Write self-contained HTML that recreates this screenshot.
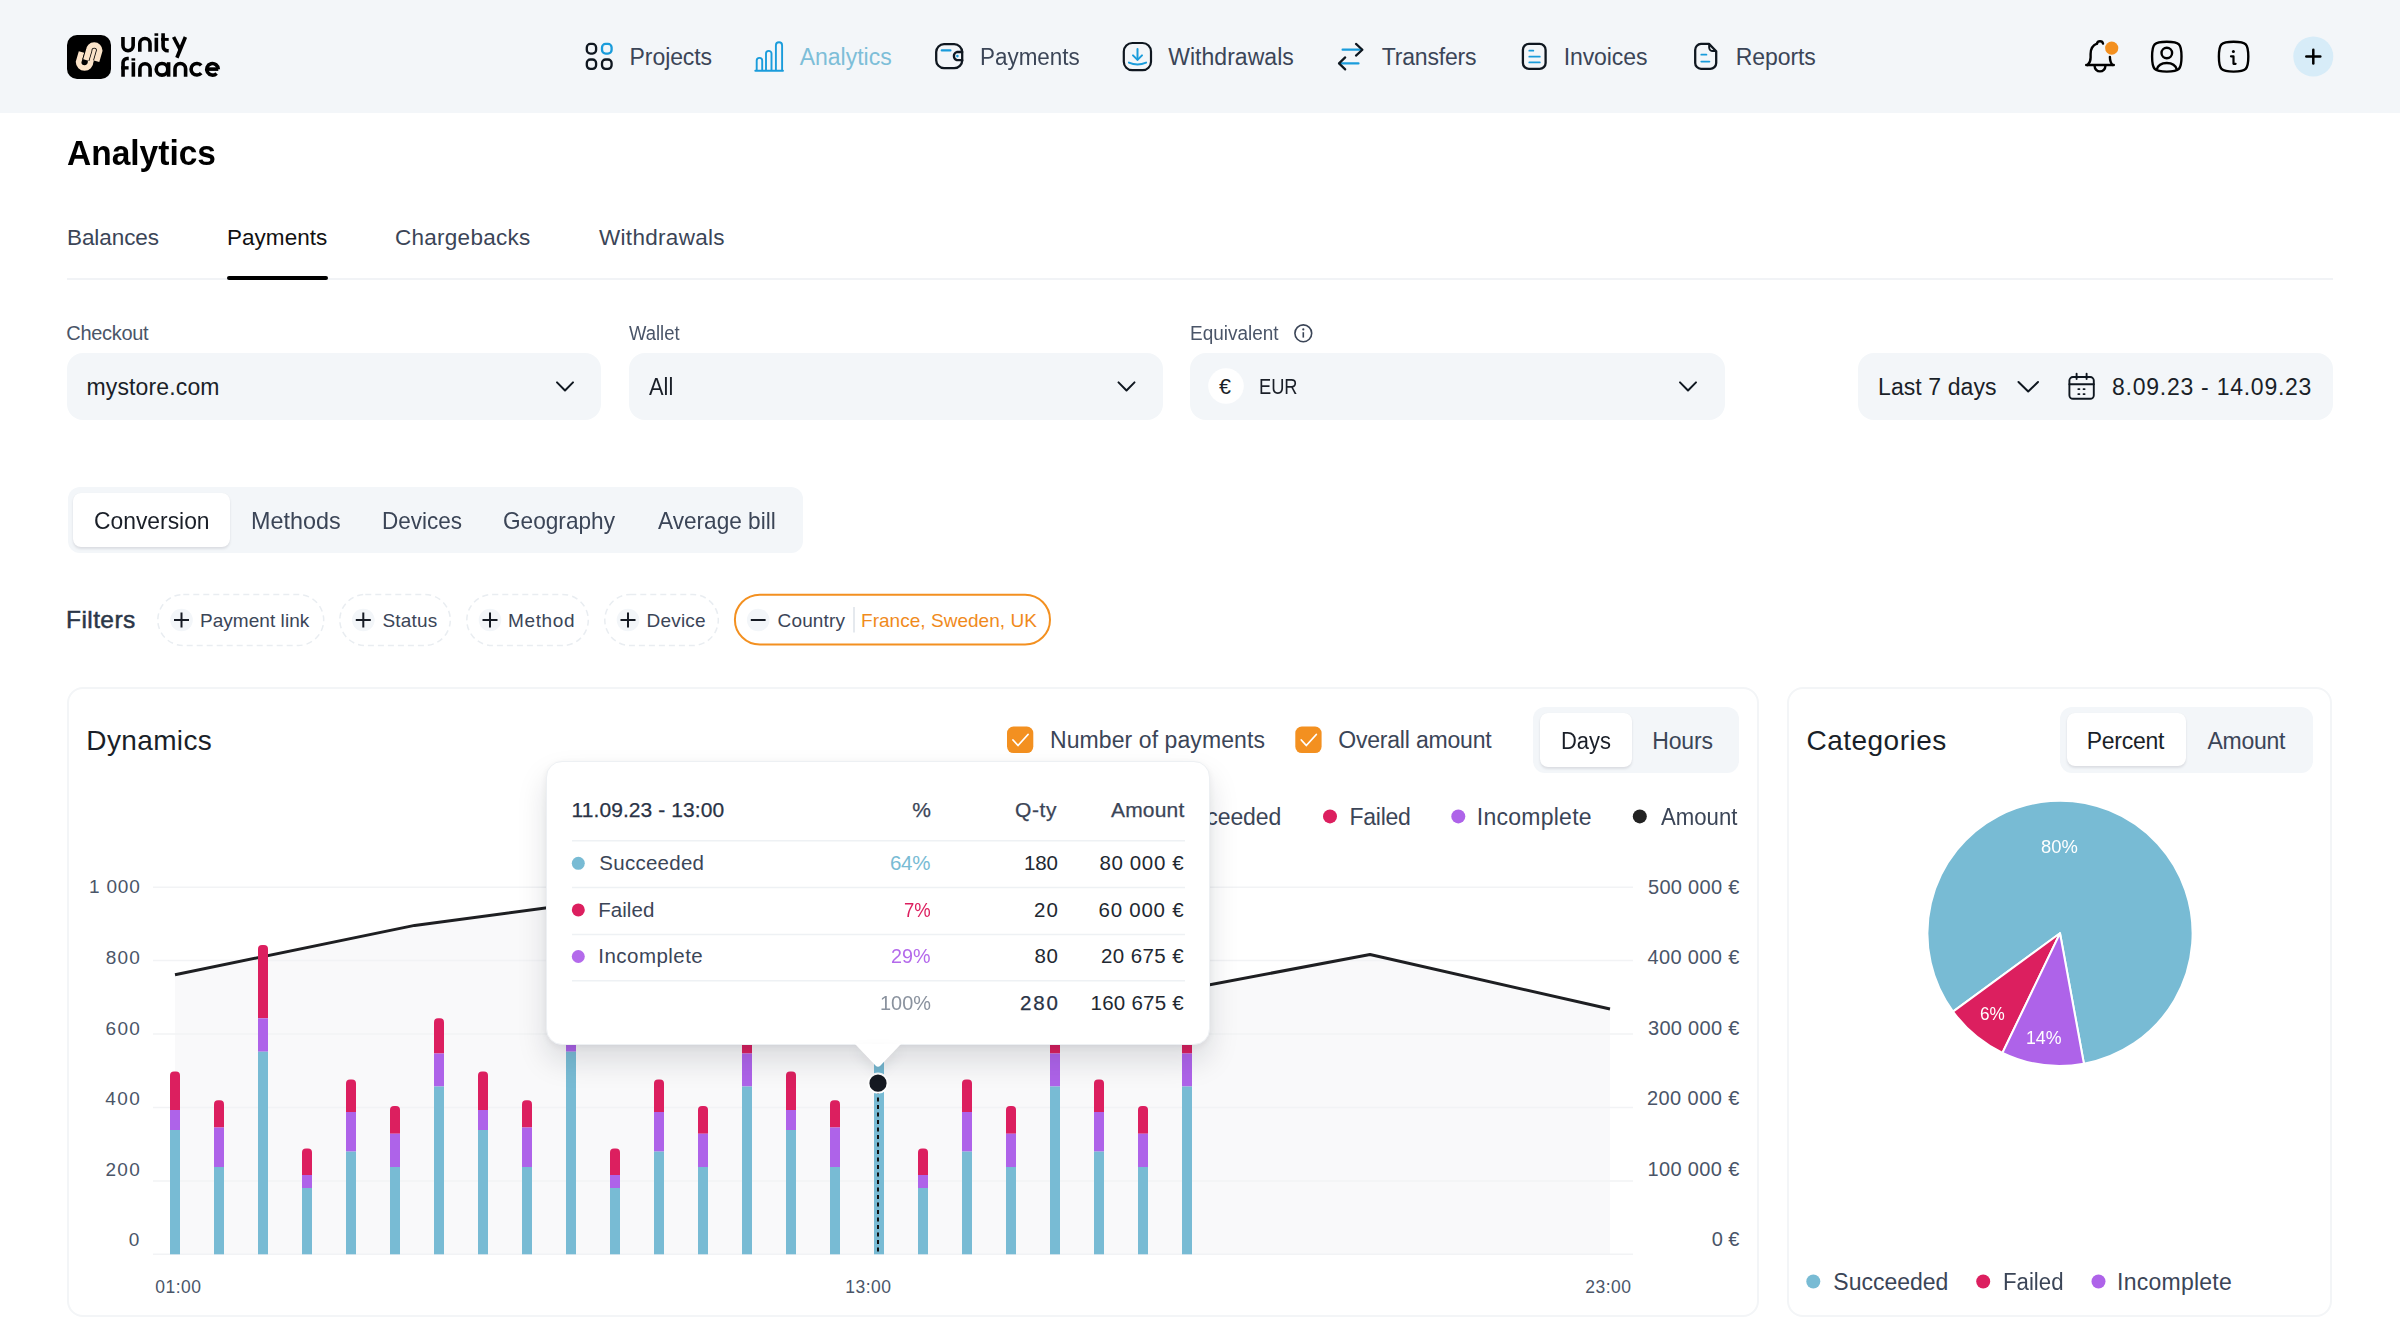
<!DOCTYPE html>
<html><head><meta charset="utf-8"><style>
html,body{margin:0;padding:0;width:2400px;height:1336px;overflow:hidden;background:#fff;}
body{position:relative;font-family:"Liberation Sans",sans-serif;}
.t{position:absolute;white-space:nowrap;font-family:"Liberation Sans",sans-serif;}
svg{position:absolute;overflow:visible;}
</style></head><body>
<div style="position:absolute;left:0.00px;top:0.00px;width:2400.00px;height:113.00px;border-radius:0px;background:#F3F6F9;"></div>
<svg width="2400" height="1336" style="left:0;top:0;" viewBox="0 0 2400 1336"><rect x="67" y="35" width="44" height="44" rx="10" fill="#000"/>
<g fill="none" stroke-linecap="butt">
<path d="M81.5 52 L78.6 62 A6 6 0 0 0 90.6 62 L95.2 46" stroke="#FBE3C8" stroke-width="5.6"/>
<path d="M85.9 60 L88.7 50.5 A5.5 5.5 0 0 1 99.7 50.5 L96.6 61.25" stroke="#000" stroke-width="7.2"/>
<path d="M85.9 60 L88.7 50.5 A5.5 5.5 0 0 1 99.7 50.5 L96.6 61.25" stroke="#FBE3C8" stroke-width="5.6"/>
</g></svg>
<svg width="2400" height="1336" style="left:0;top:0;" viewBox="0 0 2400 1336"><g fill="none" stroke="#000" stroke-width="3.6" stroke-linecap="butt">
<path d="M122.95 37 V45.6 A5.1 5.1 0 0 0 133.15 45.6 V37"/>
<path d="M139.8 51.8 V43.6 A5.1 5.1 0 0 1 150 43.6 V51.8"/>
<path d="M156.35 37.7 V51.8"/>
<path d="M163.1 33.3 V46.2 A4.6 4.6 0 0 0 167.7 50.8 H168.7"/>
<path d="M161.2 39.4 H168.7" stroke-width="2.9"/>
<path d="M173.6 37 L180.2 49.8"/>
<path d="M185.4 37 L176.9 57.8"/>
<path d="M123.05 76.7 V62.6 A4.1 4.1 0 0 1 127.15 58.5 H128.75"/>
<path d="M121.2 67.85 H128.6" stroke-width="3.4"/>
<path d="M133.35 62.2 V76.7"/>
<path d="M139.9 76.7 V68.8 A5.1 5.1 0 0 1 150.1 68.8 V76.7"/>
<circle cx="162" cy="69.3" r="5.8"/>
<path d="M168.6 62.2 V76.7"/>
<path d="M175 76.7 V68.8 A5.3 5.3 0 0 1 185.6 68.8 V76.7"/>
<path d="M201.2 65.4 A5.8 5.8 0 1 0 201.2 73.1"/>
<path d="M206.6 69.1 H218.3"/>
<path d="M218.3 69.3 A5.8 5.8 0 1 0 216.6 73.4"/>
</g>
<g fill="#000"><rect x="154.5" y="33.3" width="3.7" height="2.5"/><rect x="131.5" y="58.3" width="3.7" height="2.3"/></g></svg>
<svg width="2400" height="1336" style="left:0;top:0;" viewBox="0 0 2400 1336"><g fill="none" stroke="#0F1720" stroke-width="2.3">
<rect x="586.8" y="43.95" width="9.3" height="9.6" rx="3.6"/>
<rect x="586.8" y="59.5" width="9.3" height="9.4" rx="3.6"/>
<rect x="602" y="59.5" width="9.6" height="9.4" rx="3.6"/>
</g>
<rect x="602" y="43.95" width="9.6" height="9.6" rx="3.6" fill="none" stroke="#1A9CDB" stroke-width="2.3"/>
</svg>
<svg width="2400" height="1336" style="left:0;top:0;" viewBox="0 0 2400 1336"><g fill="none" stroke="#1A9CDB" stroke-width="1.9" stroke-linecap="round">
<path d="M756.7 70 V60.6 A2.75 2.75 0 0 1 762.2 60.6 V70"/>
<path d="M766 70 V53.6 A2.75 2.75 0 0 1 771.5 53.6 V70"/>
<path d="M775.9 70 V45.4 A3.1 3.1 0 0 1 782.1 45.4 V70"/>
<path d="M755.3 70.7 H783"/>
</g></svg>
<svg width="2400" height="1336" style="left:0;top:0;" viewBox="0 0 2400 1336"><g fill="none" stroke-width="2.3" stroke-linecap="round">
<path d="M962.2 52 V52 A8 8 0 0 0 954.2 44.2 H944 A8 8 0 0 0 936.2 52 V60.2 A8 8 0 0 0 944 68.2 H954.2 A8 8 0 0 0 962.2 60.2" stroke="#0F1720"/>
<path d="M962.2 52 H956.9 A4.3 4.3 0 0 0 956.9 60.2 H962.2 V52" stroke="#0F1720"/>
<path d="M941.8 50.4 H950.4" stroke="#1A9CDB"/>
</g><circle cx="957.4" cy="56.1" r="1.3" fill="#1A9CDB"/></svg>
<svg width="2400" height="1336" style="left:0;top:0;" viewBox="0 0 2400 1336"><rect x="1123.8" y="43" width="27.2" height="27.2" rx="8.5" fill="none" stroke="#0F1720" stroke-width="2.2"/>
<g fill="none" stroke="#1A9CDB" stroke-width="2" stroke-linecap="round" stroke-linejoin="round">
<path d="M1137.5 49 V59.6"/><path d="M1133 55.4 L1137.5 59.9 L1142 55.4"/>
<path d="M1128.9 62.6 Q1137.5 66.4 1146.1 62.6"/></g></svg>
<svg width="2400" height="1336" style="left:0;top:0;" viewBox="0 0 2400 1336"><g fill="none" stroke-width="2.2" stroke-linecap="round" stroke-linejoin="round">
<path d="M1342.6 49.7 H1361.5" stroke="#1A9CDB"/><path d="M1339.6 63.4 H1358.5" stroke="#1A9CDB"/>
<path d="M1356 43.9 L1362.4 49.7 L1356 55.6" stroke="#0F1720"/>
<path d="M1345.2 57.4 L1339 63.4 L1345.2 69.4" stroke="#0F1720"/></g></svg>
<svg width="2400" height="1336" style="left:0;top:0;" viewBox="0 0 2400 1336"><rect x="1522.9" y="43.9" width="22.7" height="25" rx="6" fill="none" stroke="#0F1720" stroke-width="2.3"/>
<g stroke="#1A9CDB" stroke-width="1.8" stroke-linecap="round"><path d="M1529.3 50.7 H1533.3"/><path d="M1529.3 56.7 H1539.8"/><path d="M1529.3 62.4 H1539.8"/></g></svg>
<svg width="2400" height="1336" style="left:0;top:0;" viewBox="0 0 2400 1336"><path d="M1709 43.9 H1701 A6 6 0 0 0 1695.2 49.9 V62.9 A6 6 0 0 0 1701 68.9 H1710.2 A6 6 0 0 0 1716.2 62.9 V51.2 Z" fill="none" stroke="#0F1720" stroke-width="2.3" stroke-linejoin="round"/>
<path d="M1709.2 44.2 V47.5 A3.6 3.6 0 0 0 1712.8 51.1 H1716" fill="none" stroke="#0F1720" stroke-width="2"/>
<g stroke="#1A9CDB" stroke-width="1.8" stroke-linecap="round"><path d="M1701.3 54.7 H1706.4"/><path d="M1701.3 61.6 H1709.4"/></g></svg>
<svg width="2400" height="1336" style="left:0;top:0;" viewBox="0 0 2400 1336"><g fill="none" stroke="#000" stroke-width="2.4" stroke-linecap="round" stroke-linejoin="round">
<path d="M2086.2 65 H2113.8"/>
<path d="M2087.6 65 Q2090.6 62.5 2090.6 57.5 V54 Q2090.6 46 2097 43.6"/>
<path d="M2097 43.6 Q2097.4 41.2 2100 41.2 Q2102.6 41.2 2103 43.6"/>
<path d="M2109.9 57 Q2110 62.5 2112.6 65"/>
<path d="M2094.6 66 A5.4 5.4 0 0 0 2105.4 66"/>
</g>
<circle cx="2111.7" cy="48.1" r="6.6" fill="#F39020"/></svg>
<svg width="2400" height="1336" style="left:0;top:0;" viewBox="0 0 2400 1336"><g fill="none" stroke="#000" stroke-width="2.4">
<path d="M2166.8 41.7 C2179.5 41.7 2181.5 43.7 2181.5 56.6 C2181.5 69.5 2179.5 71.6 2166.8 71.6 C2154.1 71.6 2152.1 69.5 2152.1 56.6 C2152.1 43.7 2154.1 41.7 2166.8 41.7 Z"/>
<circle cx="2166.8" cy="53" r="5.3"/>
<path d="M2156.6 69.8 Q2158.5 63 2166.8 63 Q2175 63 2177 69.8"/>
</g></svg>
<svg width="2400" height="1336" style="left:0;top:0;" viewBox="0 0 2400 1336"><path d="M2233.6 41.7 C2246.3 41.7 2248.3 43.7 2248.3 56.6 C2248.3 69.5 2246.3 71.6 2233.6 71.6 C2220.9 71.6 2218.9 69.5 2218.9 56.6 C2218.9 43.7 2220.9 41.7 2233.6 41.7 Z" fill="none" stroke="#000" stroke-width="2.4"/>
<circle cx="2233.4" cy="51.6" r="1.5" fill="#000"/>
<path d="M2231 56.3 H2233.5 V63.8 H2235.6" fill="none" stroke="#000" stroke-width="2.2" stroke-linecap="round" stroke-linejoin="round"/></svg>
<svg width="2400" height="1336" style="left:0;top:0;" viewBox="0 0 2400 1336"><circle cx="2313.3" cy="56.5" r="20" fill="#D7ECF8"/>
<g stroke="#000" stroke-width="2.5" stroke-linecap="round"><path d="M2306.3 56.5 H2320.3"/><path d="M2313.3 49.8 V63.4"/></g></svg>
<div style="position:absolute;left:67.00px;top:277.50px;width:2266.00px;height:2.00px;border-radius:0px;background:#F1F3F6;"></div>
<div style="position:absolute;left:226.50px;top:276.30px;width:101.90px;height:3.80px;border-radius:2px;background:#000;"></div>
<div style="position:absolute;left:67.00px;top:353.20px;width:534.30px;height:66.60px;border-radius:16px;background:#F3F6F9;"></div>
<div style="position:absolute;left:628.50px;top:353.20px;width:534.50px;height:66.60px;border-radius:16px;background:#F3F6F9;"></div>
<div style="position:absolute;left:1190.00px;top:353.20px;width:535.00px;height:66.60px;border-radius:16px;background:#F3F6F9;"></div>
<div style="position:absolute;left:1858.30px;top:353.20px;width:474.80px;height:66.60px;border-radius:16px;background:#F3F6F9;"></div>
<svg width="2400" height="1336" style="left:0;top:0;" viewBox="0 0 2400 1336"><path d="M557.0 382.4 L565.0 390.5 L573.0 382.4" fill="none" stroke="#0F1720" stroke-width="2.0" stroke-linecap="round" stroke-linejoin="round"/><path d="M1118.5 382.4 L1126.5 390.5 L1134.5 382.4" fill="none" stroke="#0F1720" stroke-width="2.0" stroke-linecap="round" stroke-linejoin="round"/><path d="M1680.0 382.4 L1688.0 390.5 L1696.0 382.4" fill="none" stroke="#0F1720" stroke-width="2.0" stroke-linecap="round" stroke-linejoin="round"/><path d="M2018.5 382.0 L2028.2 391.5 L2038.0 382.0" fill="none" stroke="#0F1720" stroke-width="2.0" stroke-linecap="round" stroke-linejoin="round"/></svg>
<svg width="2400" height="1336" style="left:0;top:0;" viewBox="0 0 2400 1336"><g fill="none" stroke="#0F1720" stroke-width="1.9" stroke-linecap="round">
<rect x="2069.4" y="377" width="24.4" height="21.8" rx="3.6"/>
<path d="M2069.4 384.3 H2093.8"/><path d="M2076.6 373.8 V379"/><path d="M2086.6 373.8 V379"/>
</g><g fill="#0F1720"><rect x="2077.4" y="388.3" width="2.9" height="1.8" rx="0.8"/><rect x="2082.6" y="388.3" width="2.9" height="1.8" rx="0.8"/><rect x="2077.4" y="393.2" width="2.9" height="1.8" rx="0.8"/><rect x="2082.6" y="393.2" width="2.9" height="1.8" rx="0.8"/></g></svg>
<svg width="2400" height="1336" style="left:0;top:0;" viewBox="0 0 2400 1336"><circle cx="1303.3" cy="333.3" r="8.4" fill="none" stroke="#3B4557" stroke-width="1.6"/>
<circle cx="1303.3" cy="329.4" r="1.1" fill="#3B4557"/><path d="M1303.3 332.2 V337.6" stroke="#3B4557" stroke-width="1.6"/>
<circle cx="1226" cy="386" r="17.8" fill="#fff"/></svg>
<div style="position:absolute;left:67.50px;top:486.70px;width:735.80px;height:66.60px;border-radius:12px;background:#F3F6F9;"></div>
<div style="position:absolute;left:73.30px;top:493.30px;width:156.70px;height:53.70px;border-radius:8px;background:#fff;box-shadow:0 2px 2.5px rgba(16,24,40,0.10),0 0 1px rgba(16,24,40,0.06);"></div>
<svg width="2400" height="1336" style="left:0;top:0;" viewBox="0 0 2400 1336"><rect x="157.8" y="594.5" width="165.9" height="51" rx="25.5" fill="none" stroke="#E9EDF1" stroke-width="1.5" stroke-dasharray="6 4"/><circle cx="181.5" cy="620" r="11.3" fill="#F3F6F9"/><g stroke="#161B24" stroke-width="2" stroke-linecap="butt"><path d="M174.0 620 H189.0"/><path d="M181.5 612.5 V627.5"/></g><rect x="339.8" y="594.5" width="110.5" height="51" rx="25.5" fill="none" stroke="#E9EDF1" stroke-width="1.5" stroke-dasharray="6 4"/><circle cx="363.3" cy="620" r="11.3" fill="#F3F6F9"/><g stroke="#161B24" stroke-width="2" stroke-linecap="butt"><path d="M355.8 620 H370.8"/><path d="M363.3 612.5 V627.5"/></g><rect x="466.8" y="594.5" width="121.5" height="51" rx="25.5" fill="none" stroke="#E9EDF1" stroke-width="1.5" stroke-dasharray="6 4"/><circle cx="490.0" cy="620" r="11.3" fill="#F3F6F9"/><g stroke="#161B24" stroke-width="2" stroke-linecap="butt"><path d="M482.5 620 H497.5"/><path d="M490.0 612.5 V627.5"/></g><rect x="604.8" y="594.5" width="113.5" height="51" rx="25.5" fill="none" stroke="#E9EDF1" stroke-width="1.5" stroke-dasharray="6 4"/><circle cx="628.0" cy="620" r="11.3" fill="#F3F6F9"/><g stroke="#161B24" stroke-width="2" stroke-linecap="butt"><path d="M620.5 620 H635.5"/><path d="M628.0 612.5 V627.5"/></g><rect x="734.9" y="594.75" width="315.1" height="49.75" rx="24.9" fill="none" stroke="#F39020" stroke-width="2"/><circle cx="758.2" cy="620" r="11.3" fill="#F3F6F9"/><path d="M750.8 620 H765.6" stroke="#161B24" stroke-width="2"/><path d="M854 607 V632.4" stroke="#DCE2E9" stroke-width="1.5"/></svg>
<div style="position:absolute;left:67.30px;top:687.30px;width:1691.70px;height:630.00px;border-radius:16px;background:#fff;box-sizing:border-box;border:2px solid #F3F5F7;"></div>
<div style="position:absolute;left:1787.40px;top:687.30px;width:544.60px;height:630.00px;border-radius:16px;background:#fff;box-sizing:border-box;border:2px solid #F3F5F7;"></div>
<svg width="2400" height="1336" style="left:0;top:0;" viewBox="0 0 2400 1336"><rect x="1007.0" y="726.6" width="26.3" height="26.5" rx="6.5" fill="#F39020"/><path d="M1013.0 740 L1018.0 745.5 L1028.0 734.5" fill="none" stroke="#fff" stroke-width="1.8" stroke-linecap="round" stroke-linejoin="round"/></svg>
<svg width="2400" height="1336" style="left:0;top:0;" viewBox="0 0 2400 1336"><rect x="1295.3" y="726.6" width="26.3" height="26.5" rx="6.5" fill="#F39020"/><path d="M1301.3 740 L1306.3 745.5 L1316.3 734.5" fill="none" stroke="#fff" stroke-width="1.8" stroke-linecap="round" stroke-linejoin="round"/></svg>
<div style="position:absolute;left:1533.00px;top:706.80px;width:206.40px;height:66.20px;border-radius:12px;background:#F3F6F9;"></div>
<div style="position:absolute;left:1539.70px;top:713.40px;width:91.90px;height:53.50px;border-radius:8px;background:#fff;box-shadow:0 2px 2.5px rgba(16,24,40,0.10),0 0 1px rgba(16,24,40,0.06);"></div>
<div style="position:absolute;left:2060.00px;top:706.60px;width:252.50px;height:66.40px;border-radius:12px;background:#F3F6F9;"></div>
<div style="position:absolute;left:2066.80px;top:713.30px;width:119.20px;height:53.20px;border-radius:8px;background:#fff;box-shadow:0 2px 2.5px rgba(16,24,40,0.10),0 0 1px rgba(16,24,40,0.06);"></div>
<svg width="2400" height="1336" style="left:0;top:0;" viewBox="0 0 2400 1336"><circle cx="1150" cy="816.4" r="7" fill="#78BBD4"/><circle cx="1330" cy="816.4" r="7" fill="#DC1F5F"/><circle cx="1458.3" cy="816.4" r="7" fill="#AE63E9"/><circle cx="1639.8" cy="816.4" r="7" fill="#222"/></svg>
<svg width="2400" height="1336" style="left:0;top:0;" viewBox="0 0 2400 1336"><circle cx="1813.3" cy="1281.5" r="7" fill="#78BBD4"/><circle cx="1983.2" cy="1281.5" r="7" fill="#DC1F5F"/><circle cx="2098.5" cy="1281.5" r="7" fill="#AE63E9"/></svg>
<svg width="2400" height="1336" style="left:0;top:0;" viewBox="0 0 2400 1336"><polygon points="175.0,974.7 414.6,925.4 653.6,893.5 892.6,885.0 1131.8,999.5 1370.0,954.5 1610.0,1009.0 1610,1254.3 175,1254.3" fill="#F9F9FA"/><path d="M153 887.2 H1633" stroke="#F2F3F5" stroke-width="1.5"/><path d="M153 960.6 H1633" stroke="#F2F3F5" stroke-width="1.5"/><path d="M153 1034.0 H1633" stroke="#F2F3F5" stroke-width="1.5"/><path d="M153 1107.5 H1633" stroke="#F2F3F5" stroke-width="1.5"/><path d="M153 1180.9 H1633" stroke="#F2F3F5" stroke-width="1.5"/><path d="M153 1254.3 H1633" stroke="#F2F3F5" stroke-width="1.5"/><polyline points="175.0,974.7 414.6,925.4 653.6,893.5 892.6,885.0 1131.8,999.5 1370.0,954.5 1610.0,1009.0" fill="none" stroke="#1E1F22" stroke-width="3" stroke-linejoin="round"/><path d="M170.0 1110.0 V1075.4 A4 4 0 0 1 174.0 1071.4 H176.0 A4 4 0 0 1 180.0 1075.4 V1110.0 Z" fill="#DC1F5F"/><rect x="170.0" y="1110.0" width="10" height="20.0" fill="#AE63E9"/><rect x="170.0" y="1130.0" width="10" height="124.3" fill="#78BBD4"/><path d="M214.0 1127.5 V1104.3 A4 4 0 0 1 218.0 1100.3 H220.0 A4 4 0 0 1 224.0 1104.3 V1127.5 Z" fill="#DC1F5F"/><rect x="214.0" y="1127.5" width="10" height="39.5" fill="#AE63E9"/><rect x="214.0" y="1167.0" width="10" height="87.3" fill="#78BBD4"/><path d="M258.0 1018.3 V949.0 A4 4 0 0 1 262.0 945.0 H264.0 A4 4 0 0 1 268.0 949.0 V1018.3 Z" fill="#DC1F5F"/><rect x="258.0" y="1018.3" width="10" height="33.4" fill="#AE63E9"/><rect x="258.0" y="1051.7" width="10" height="202.6" fill="#78BBD4"/><path d="M302.0 1175.0 V1152.5 A4 4 0 0 1 306.0 1148.5 H308.0 A4 4 0 0 1 312.0 1152.5 V1175.0 Z" fill="#DC1F5F"/><rect x="302.0" y="1175.0" width="10" height="13.0" fill="#AE63E9"/><rect x="302.0" y="1188.0" width="10" height="66.3" fill="#78BBD4"/><path d="M346.0 1112.0 V1083.6 A4 4 0 0 1 350.0 1079.6 H352.0 A4 4 0 0 1 356.0 1083.6 V1112.0 Z" fill="#DC1F5F"/><rect x="346.0" y="1112.0" width="10" height="39.6" fill="#AE63E9"/><rect x="346.0" y="1151.6" width="10" height="102.7" fill="#78BBD4"/><path d="M390.0 1133.7 V1110.0 A4 4 0 0 1 394.0 1106.0 H396.0 A4 4 0 0 1 400.0 1110.0 V1133.7 Z" fill="#DC1F5F"/><rect x="390.0" y="1133.7" width="10" height="33.3" fill="#AE63E9"/><rect x="390.0" y="1167.0" width="10" height="87.3" fill="#78BBD4"/><path d="M434.0 1053.5 V1022.3 A4 4 0 0 1 438.0 1018.3 H440.0 A4 4 0 0 1 444.0 1022.3 V1053.5 Z" fill="#DC1F5F"/><rect x="434.0" y="1053.5" width="10" height="33.0" fill="#AE63E9"/><rect x="434.0" y="1086.5" width="10" height="167.8" fill="#78BBD4"/><path d="M478.0 1110.0 V1075.4 A4 4 0 0 1 482.0 1071.4 H484.0 A4 4 0 0 1 488.0 1075.4 V1110.0 Z" fill="#DC1F5F"/><rect x="478.0" y="1110.0" width="10" height="20.0" fill="#AE63E9"/><rect x="478.0" y="1130.0" width="10" height="124.3" fill="#78BBD4"/><path d="M522.0 1127.5 V1104.3 A4 4 0 0 1 526.0 1100.3 H528.0 A4 4 0 0 1 532.0 1104.3 V1127.5 Z" fill="#DC1F5F"/><rect x="522.0" y="1127.5" width="10" height="39.5" fill="#AE63E9"/><rect x="522.0" y="1167.0" width="10" height="87.3" fill="#78BBD4"/><path d="M566.0 1018.3 V949.0 A4 4 0 0 1 570.0 945.0 H572.0 A4 4 0 0 1 576.0 949.0 V1018.3 Z" fill="#DC1F5F"/><rect x="566.0" y="1018.3" width="10" height="33.4" fill="#AE63E9"/><rect x="566.0" y="1051.7" width="10" height="202.6" fill="#78BBD4"/><path d="M610.0 1175.0 V1152.5 A4 4 0 0 1 614.0 1148.5 H616.0 A4 4 0 0 1 620.0 1152.5 V1175.0 Z" fill="#DC1F5F"/><rect x="610.0" y="1175.0" width="10" height="13.0" fill="#AE63E9"/><rect x="610.0" y="1188.0" width="10" height="66.3" fill="#78BBD4"/><path d="M654.0 1112.0 V1083.6 A4 4 0 0 1 658.0 1079.6 H660.0 A4 4 0 0 1 664.0 1083.6 V1112.0 Z" fill="#DC1F5F"/><rect x="654.0" y="1112.0" width="10" height="39.6" fill="#AE63E9"/><rect x="654.0" y="1151.6" width="10" height="102.7" fill="#78BBD4"/><path d="M698.0 1133.7 V1110.0 A4 4 0 0 1 702.0 1106.0 H704.0 A4 4 0 0 1 708.0 1110.0 V1133.7 Z" fill="#DC1F5F"/><rect x="698.0" y="1133.7" width="10" height="33.3" fill="#AE63E9"/><rect x="698.0" y="1167.0" width="10" height="87.3" fill="#78BBD4"/><path d="M742.0 1053.5 V1022.3 A4 4 0 0 1 746.0 1018.3 H748.0 A4 4 0 0 1 752.0 1022.3 V1053.5 Z" fill="#DC1F5F"/><rect x="742.0" y="1053.5" width="10" height="33.0" fill="#AE63E9"/><rect x="742.0" y="1086.5" width="10" height="167.8" fill="#78BBD4"/><path d="M786.0 1110.0 V1075.4 A4 4 0 0 1 790.0 1071.4 H792.0 A4 4 0 0 1 796.0 1075.4 V1110.0 Z" fill="#DC1F5F"/><rect x="786.0" y="1110.0" width="10" height="20.0" fill="#AE63E9"/><rect x="786.0" y="1130.0" width="10" height="124.3" fill="#78BBD4"/><path d="M830.0 1127.5 V1104.3 A4 4 0 0 1 834.0 1100.3 H836.0 A4 4 0 0 1 840.0 1104.3 V1127.5 Z" fill="#DC1F5F"/><rect x="830.0" y="1127.5" width="10" height="39.5" fill="#AE63E9"/><rect x="830.0" y="1167.0" width="10" height="87.3" fill="#78BBD4"/><path d="M874.0 1018.3 V949.0 A4 4 0 0 1 878.0 945.0 H880.0 A4 4 0 0 1 884.0 949.0 V1018.3 Z" fill="#DC1F5F"/><rect x="874.0" y="1018.3" width="10" height="33.4" fill="#AE63E9"/><rect x="874.0" y="1051.7" width="10" height="202.6" fill="#78BBD4"/><path d="M918.0 1175.0 V1152.5 A4 4 0 0 1 922.0 1148.5 H924.0 A4 4 0 0 1 928.0 1152.5 V1175.0 Z" fill="#DC1F5F"/><rect x="918.0" y="1175.0" width="10" height="13.0" fill="#AE63E9"/><rect x="918.0" y="1188.0" width="10" height="66.3" fill="#78BBD4"/><path d="M962.0 1112.0 V1083.6 A4 4 0 0 1 966.0 1079.6 H968.0 A4 4 0 0 1 972.0 1083.6 V1112.0 Z" fill="#DC1F5F"/><rect x="962.0" y="1112.0" width="10" height="39.6" fill="#AE63E9"/><rect x="962.0" y="1151.6" width="10" height="102.7" fill="#78BBD4"/><path d="M1006.0 1133.7 V1110.0 A4 4 0 0 1 1010.0 1106.0 H1012.0 A4 4 0 0 1 1016.0 1110.0 V1133.7 Z" fill="#DC1F5F"/><rect x="1006.0" y="1133.7" width="10" height="33.3" fill="#AE63E9"/><rect x="1006.0" y="1167.0" width="10" height="87.3" fill="#78BBD4"/><path d="M1050.0 1053.5 V1022.3 A4 4 0 0 1 1054.0 1018.3 H1056.0 A4 4 0 0 1 1060.0 1022.3 V1053.5 Z" fill="#DC1F5F"/><rect x="1050.0" y="1053.5" width="10" height="33.0" fill="#AE63E9"/><rect x="1050.0" y="1086.5" width="10" height="167.8" fill="#78BBD4"/><path d="M1094.0 1112.0 V1083.6 A4 4 0 0 1 1098.0 1079.6 H1100.0 A4 4 0 0 1 1104.0 1083.6 V1112.0 Z" fill="#DC1F5F"/><rect x="1094.0" y="1112.0" width="10" height="39.6" fill="#AE63E9"/><rect x="1094.0" y="1151.6" width="10" height="102.7" fill="#78BBD4"/><path d="M1138.0 1133.7 V1110.0 A4 4 0 0 1 1142.0 1106.0 H1144.0 A4 4 0 0 1 1148.0 1110.0 V1133.7 Z" fill="#DC1F5F"/><rect x="1138.0" y="1133.7" width="10" height="33.3" fill="#AE63E9"/><rect x="1138.0" y="1167.0" width="10" height="87.3" fill="#78BBD4"/><path d="M1182.0 1053.5 V1022.3 A4 4 0 0 1 1186.0 1018.3 H1188.0 A4 4 0 0 1 1192.0 1022.3 V1053.5 Z" fill="#DC1F5F"/><rect x="1182.0" y="1053.5" width="10" height="33.0" fill="#AE63E9"/><rect x="1182.0" y="1086.5" width="10" height="167.8" fill="#78BBD4"/><path d="M878 1090 V1254" stroke="#111" stroke-width="2" stroke-dasharray="4 3.5"/><circle cx="878" cy="1083.2" r="9.6" fill="#161A22" stroke="#fff" stroke-width="2"/></svg>
<svg width="2400" height="1336" style="left:0;top:0;" viewBox="0 0 2400 1336"><path d="M2060.00 933.30 L1953.00 1011.61 A132.60 132.60 0 1 1 2083.94 1063.72 Z" fill="#78BBD4" stroke="#fff" stroke-width="2" stroke-linejoin="round"/><path d="M2060.00 933.30 L2002.50 1052.78 A132.60 132.60 0 0 1 1953.00 1011.61 Z" fill="#DC1F5F" stroke="#fff" stroke-width="2" stroke-linejoin="round"/><path d="M2060.00 933.30 L2083.94 1063.72 A132.60 132.60 0 0 1 2002.50 1052.78 Z" fill="#AE63E9" stroke="#fff" stroke-width="2" stroke-linejoin="round"/></svg>
<div class="t" style="left:629.60px;top:46.00px;font-size:23.0px;line-height:23.0px;color:#3B4557;letter-spacing:-0.083px;">Projects</div>
<div class="t" style="left:979.72px;top:46.00px;font-size:23.0px;line-height:23.0px;color:#3B4557;transform:scaleX(0.9755);transform-origin:0 0;">Payments</div>
<div class="t" style="left:1168.20px;top:46.00px;font-size:23.0px;line-height:23.0px;color:#3B4557;letter-spacing:0.035px;">Withdrawals</div>
<div class="t" style="left:1381.70px;top:46.00px;font-size:23.0px;line-height:23.0px;color:#3B4557;letter-spacing:-0.185px;">Transfers</div>
<div class="t" style="left:1563.70px;top:46.00px;font-size:23.0px;line-height:23.0px;color:#3B4557;letter-spacing:-0.082px;">Invoices</div>
<div class="t" style="left:1735.70px;top:46.00px;font-size:23.0px;line-height:23.0px;color:#3B4557;letter-spacing:-0.072px;">Reports</div>
<div class="t" style="left:799.70px;top:46.00px;font-size:23.0px;line-height:23.0px;color:#7DBED8;">Analytics</div>
<div class="t" style="left:67.30px;top:135.00px;font-size:35.0px;line-height:35.0px;color:#000;font-weight:700;transform:scaleX(0.9571);transform-origin:0 0;">Analytics</div>
<div class="t" style="left:67.00px;top:227.00px;font-size:22.5px;line-height:22.5px;color:#3B4557;letter-spacing:-0.080px;">Balances</div>
<div class="t" style="left:227.00px;top:227.00px;font-size:22.5px;line-height:22.5px;color:#111;letter-spacing:0.030px;">Payments</div>
<div class="t" style="left:395.00px;top:227.00px;font-size:22.5px;line-height:22.5px;color:#3B4557;letter-spacing:0.268px;">Chargebacks</div>
<div class="t" style="left:599.00px;top:227.00px;font-size:22.5px;line-height:22.5px;color:#3B4557;letter-spacing:0.302px;">Withdrawals</div>
<div class="t" style="left:66.30px;top:323.00px;font-size:20.0px;line-height:20.0px;color:#4A5568;letter-spacing:-0.319px;">Checkout</div>
<div class="t" style="left:629.00px;top:323.00px;font-size:20.0px;line-height:20.0px;color:#4A5568;transform:scaleX(0.9228);transform-origin:0 0;">Wallet</div>
<div class="t" style="left:1190.05px;top:323.00px;font-size:20.0px;line-height:20.0px;color:#4A5568;transform:scaleX(0.9478);transform-origin:0 0;">Equivalent</div>
<div class="t" style="left:86.50px;top:376.00px;font-size:23.0px;line-height:23.0px;color:#1A1F28;letter-spacing:0.133px;">mystore.com</div>
<div class="t" style="left:648.80px;top:376.00px;font-size:23.0px;line-height:23.0px;color:#1A1F28;transform:scaleX(0.9488);transform-origin:0 0;">All</div>
<div class="t" style="left:1259.15px;top:377.00px;font-size:21.5px;line-height:21.5px;color:#1A1F28;transform:scaleX(0.8492);transform-origin:0 0;">EUR</div>
<div class="t" style="left:1219.00px;top:377.00px;font-size:21.5px;line-height:21.5px;color:#1A1F28;">€</div>
<div class="t" style="left:1878.00px;top:376.00px;font-size:23.0px;line-height:23.0px;color:#1A1F28;letter-spacing:0.087px;">Last 7 days</div>
<div class="t" style="left:2112.00px;top:376.00px;font-size:23.0px;line-height:23.0px;color:#1A1F28;letter-spacing:0.746px;">8.09.23 - 14.09.23</div>
<div class="t" style="left:94.05px;top:508.70px;font-size:24.0px;line-height:24.0px;color:#1A1F28;transform:scaleX(0.9517);transform-origin:0 0;">Conversion</div>
<div class="t" style="left:250.73px;top:508.70px;font-size:24.0px;line-height:24.0px;color:#3B4557;transform:scaleX(0.9731);transform-origin:0 0;">Methods</div>
<div class="t" style="left:381.56px;top:508.70px;font-size:24.0px;line-height:24.0px;color:#3B4557;transform:scaleX(0.9388);transform-origin:0 0;">Devices</div>
<div class="t" style="left:503.06px;top:508.70px;font-size:24.0px;line-height:24.0px;color:#3B4557;transform:scaleX(0.9427);transform-origin:0 0;">Geography</div>
<div class="t" style="left:657.50px;top:508.70px;font-size:24.0px;line-height:24.0px;color:#3B4557;transform:scaleX(0.9423);transform-origin:0 0;">Average bill</div>
<div class="t" style="left:66.00px;top:608.00px;font-size:24.5px;line-height:24.5px;color:#2B3648;letter-spacing:0.426px;-webkit-text-stroke:0.50px #2B3648;">Filters</div>
<div class="t" style="left:200.00px;top:610.50px;font-size:19.0px;line-height:19.0px;color:#3B4557;letter-spacing:0.044px;">Payment link</div>
<div class="t" style="left:382.50px;top:610.50px;font-size:19.0px;line-height:19.0px;color:#3B4557;letter-spacing:0.167px;">Status</div>
<div class="t" style="left:508.00px;top:610.50px;font-size:19.0px;line-height:19.0px;color:#3B4557;letter-spacing:0.639px;">Method</div>
<div class="t" style="left:646.50px;top:610.50px;font-size:19.0px;line-height:19.0px;color:#3B4557;letter-spacing:0.198px;">Device</div>
<div class="t" style="left:777.60px;top:610.50px;font-size:19.0px;line-height:19.0px;color:#3B4557;letter-spacing:0.129px;">Country</div>
<div class="t" style="left:861.00px;top:610.50px;font-size:19.0px;line-height:19.0px;color:#F08A1C;letter-spacing:0.033px;">France, Sweden, UK</div>
<div class="t" style="left:86.30px;top:727.00px;font-size:28.0px;line-height:28.0px;color:#1A1F28;letter-spacing:0.370px;">Dynamics</div>
<div class="t" style="left:1050.00px;top:729.00px;font-size:23.0px;line-height:23.0px;color:#3B4557;letter-spacing:0.084px;">Number of payments</div>
<div class="t" style="left:1338.20px;top:729.00px;font-size:23.0px;line-height:23.0px;color:#3B4557;letter-spacing:-0.190px;">Overall amount</div>
<div class="t" style="left:1560.75px;top:729.50px;font-size:23.0px;line-height:23.0px;color:#1A1F28;transform:scaleX(0.9548);transform-origin:0 0;">Days</div>
<div class="t" style="left:1652.20px;top:729.50px;font-size:23.0px;line-height:23.0px;color:#3B4557;letter-spacing:-0.163px;">Hours</div>
<div class="t" style="left:1167.00px;top:806.00px;font-size:23.0px;line-height:23.0px;color:#3B4557;letter-spacing:-0.100px;">Succeeded</div>
<div class="t" style="left:1349.50px;top:806.00px;font-size:23.0px;line-height:23.0px;color:#3B4557;letter-spacing:-0.270px;">Failed</div>
<div class="t" style="left:1476.80px;top:806.00px;font-size:23.0px;line-height:23.0px;color:#3B4557;letter-spacing:0.254px;">Incomplete</div>
<div class="t" style="left:1660.80px;top:806.00px;font-size:23.0px;line-height:23.0px;color:#3B4557;transform:scaleX(0.9640);transform-origin:0 0;">Amount</div>
<div class="t" style="left:88.90px;top:877.40px;font-size:19.0px;line-height:19.0px;color:#4A5568;letter-spacing:0.830px;">1 000</div>
<div class="t" style="left:105.80px;top:948.00px;font-size:19.0px;line-height:19.0px;color:#4A5568;letter-spacing:1.133px;">800</div>
<div class="t" style="left:105.60px;top:1018.60px;font-size:19.0px;line-height:19.0px;color:#4A5568;letter-spacing:1.233px;">600</div>
<div class="t" style="left:105.20px;top:1089.20px;font-size:19.0px;line-height:19.0px;color:#4A5568;letter-spacing:1.433px;">400</div>
<div class="t" style="left:105.40px;top:1159.80px;font-size:19.0px;line-height:19.0px;color:#4A5568;letter-spacing:1.333px;">200</div>
<div class="t" style="left:128.70px;top:1230.40px;font-size:19.0px;line-height:19.0px;color:#4A5568;">0</div>
<div class="t" style="left:1648.00px;top:876.50px;font-size:20.0px;line-height:20.0px;color:#4A5568;letter-spacing:0.294px;">500 000 €</div>
<div class="t" style="left:1647.50px;top:947.08px;font-size:20.0px;line-height:20.0px;color:#4A5568;letter-spacing:0.356px;">400 000 €</div>
<div class="t" style="left:1648.00px;top:1017.66px;font-size:20.0px;line-height:20.0px;color:#4A5568;letter-spacing:0.294px;">300 000 €</div>
<div class="t" style="left:1647.00px;top:1088.24px;font-size:20.0px;line-height:20.0px;color:#4A5568;letter-spacing:0.419px;">200 000 €</div>
<div class="t" style="left:1647.50px;top:1158.82px;font-size:20.0px;line-height:20.0px;color:#4A5568;letter-spacing:0.356px;">100 000 €</div>
<div class="t" style="left:1711.80px;top:1229.40px;font-size:20.0px;line-height:20.0px;color:#4A5568;letter-spacing:-0.140px;">0 €</div>
<div class="t" style="left:155.30px;top:1279.10px;font-size:17.5px;line-height:17.5px;color:#4A5568;letter-spacing:0.460px;">01:00</div>
<div class="t" style="left:845.25px;top:1279.10px;font-size:17.5px;line-height:17.5px;color:#4A5568;letter-spacing:0.485px;">13:00</div>
<div class="t" style="left:1585.20px;top:1279.10px;font-size:17.5px;line-height:17.5px;color:#4A5568;letter-spacing:0.510px;">23:00</div>
<div class="t" style="left:1806.50px;top:727.00px;font-size:28.0px;line-height:28.0px;color:#1A1F28;letter-spacing:0.477px;">Categories</div>
<div class="t" style="left:2086.80px;top:729.50px;font-size:23.0px;line-height:23.0px;color:#1A1F28;letter-spacing:-0.279px;">Percent</div>
<div class="t" style="left:2207.40px;top:729.50px;font-size:23.0px;line-height:23.0px;color:#3B4557;letter-spacing:-0.255px;">Amount</div>
<div class="t" style="left:2041.30px;top:837.40px;font-size:19.0px;line-height:19.0px;color:#FFFFFF;transform:scaleX(0.9676);transform-origin:0 0;">80%</div>
<div class="t" style="left:1980.00px;top:1003.60px;font-size:19.0px;line-height:19.0px;color:#FFFFFF;transform:scaleX(0.9033);transform-origin:0 0;">6%</div>
<div class="t" style="left:2025.67px;top:1027.50px;font-size:19.0px;line-height:19.0px;color:#FFFFFF;transform:scaleX(0.9345);transform-origin:0 0;">14%</div>
<div class="t" style="left:1833.30px;top:1271.00px;font-size:23.0px;line-height:23.0px;color:#3B4557;letter-spacing:-0.012px;">Succeeded</div>
<div class="t" style="left:2003.23px;top:1271.00px;font-size:23.0px;line-height:23.0px;color:#3B4557;transform:scaleX(0.9663);transform-origin:0 0;">Failed</div>
<div class="t" style="left:2117.00px;top:1271.00px;font-size:23.0px;line-height:23.0px;color:#3B4557;letter-spacing:0.254px;">Incomplete</div>
<div style="position:absolute;left:545.50px;top:761.00px;width:664.50px;height:284.30px;border-radius:16px;background:#fff;box-sizing:border-box;border:1px solid #EDF0F3;box-shadow:0 16px 30px rgba(16,24,40,0.13),0 2px 6px rgba(16,24,40,0.06);"></div><svg width="2400" height="1336" style="left:0;top:0;filter:drop-shadow(0 6px 6px rgba(16,24,40,0.08));" viewBox="0 0 2400 1336"><path d="M855 1044 L875.5 1065.5 Q878 1068 880.5 1065.5 L901 1044 Z" fill="#fff"/></svg><svg width="2400" height="1336" style="left:0;top:0;" viewBox="0 0 2400 1336"><path d="M572 840.8 H1185" stroke="#EEF1F4" stroke-width="1.5"/><path d="M572 887.5 H1185" stroke="#EEF1F4" stroke-width="1.5"/><path d="M572 934.4 H1185" stroke="#EEF1F4" stroke-width="1.5"/><path d="M572 980.8 H1185" stroke="#EEF1F4" stroke-width="1.5"/><circle cx="578.3" cy="863.3" r="6.5" fill="#78BBD4"/><circle cx="578.3" cy="909.9" r="6.5" fill="#DC1F5F"/><circle cx="578.3" cy="956.5" r="6.5" fill="#B46AEB"/></svg><div class="t" style="left:571.50px;top:798.50px;font-size:21.0px;line-height:21.0px;color:#2A3346;letter-spacing:0.085px;-webkit-text-stroke:0.25px #2A3346;">11.09.23 - 13:00</div>
<div class="t" style="left:912.20px;top:798.70px;font-size:21.0px;line-height:21.0px;color:#3B4557;-webkit-text-stroke:0.25px #3B4557;">%</div>
<div class="t" style="left:1015.00px;top:798.70px;font-size:21.0px;line-height:21.0px;color:#3B4557;letter-spacing:0.613px;-webkit-text-stroke:0.25px #3B4557;">Q-ty</div>
<div class="t" style="left:1111.00px;top:798.70px;font-size:21.0px;line-height:21.0px;color:#3B4557;letter-spacing:0.172px;-webkit-text-stroke:0.25px #3B4557;">Amount</div>
<div class="t" style="left:599.30px;top:853.00px;font-size:20.5px;line-height:20.5px;color:#3B4557;letter-spacing:0.265px;">Succeeded</div>
<div class="t" style="left:890.00px;top:853.00px;font-size:20.5px;line-height:20.5px;color:#78BBD4;letter-spacing:-0.301px;">64%</div>
<div class="t" style="left:1024.00px;top:853.00px;font-size:20.5px;line-height:20.5px;color:#222831;letter-spacing:-0.151px;">180</div>
<div class="t" style="left:1099.50px;top:853.00px;font-size:20.5px;line-height:20.5px;color:#222831;letter-spacing:0.615px;">80 000 €</div>
<div class="t" style="left:598.30px;top:899.60px;font-size:20.5px;line-height:20.5px;color:#3B4557;letter-spacing:0.033px;">Failed</div>
<div class="t" style="left:903.70px;top:899.60px;font-size:20.5px;line-height:20.5px;color:#DC1F5F;transform:scaleX(0.9014);transform-origin:0 0;">7%</div>
<div class="t" style="left:1034.00px;top:899.60px;font-size:20.5px;line-height:20.5px;color:#222831;letter-spacing:1.099px;">20</div>
<div class="t" style="left:1098.50px;top:899.60px;font-size:20.5px;line-height:20.5px;color:#222831;letter-spacing:0.758px;">60 000 €</div>
<div class="t" style="left:598.30px;top:946.20px;font-size:20.5px;line-height:20.5px;color:#3B4557;letter-spacing:0.458px;">Incomplete</div>
<div class="t" style="left:890.94px;top:946.20px;font-size:20.5px;line-height:20.5px;color:#B46AEB;transform:scaleX(0.9623);transform-origin:0 0;">29%</div>
<div class="t" style="left:1034.60px;top:946.20px;font-size:20.5px;line-height:20.5px;color:#222831;letter-spacing:0.499px;">80</div>
<div class="t" style="left:1101.00px;top:946.20px;font-size:20.5px;line-height:20.5px;color:#222831;letter-spacing:0.400px;">20 675 €</div>
<div class="t" style="left:879.53px;top:992.50px;font-size:20.5px;line-height:20.5px;color:#8A929E;transform:scaleX(0.9706);transform-origin:0 0;">100%</div>
<div class="t" style="left:1020.00px;top:992.50px;font-size:20.5px;line-height:20.5px;color:#2A3346;letter-spacing:1.849px;-webkit-text-stroke:0.25px #2A3346;">280</div>
<div class="t" style="left:1090.60px;top:992.50px;font-size:20.5px;line-height:20.5px;color:#222831;letter-spacing:0.225px;">160 675 €</div>
</body></html>
